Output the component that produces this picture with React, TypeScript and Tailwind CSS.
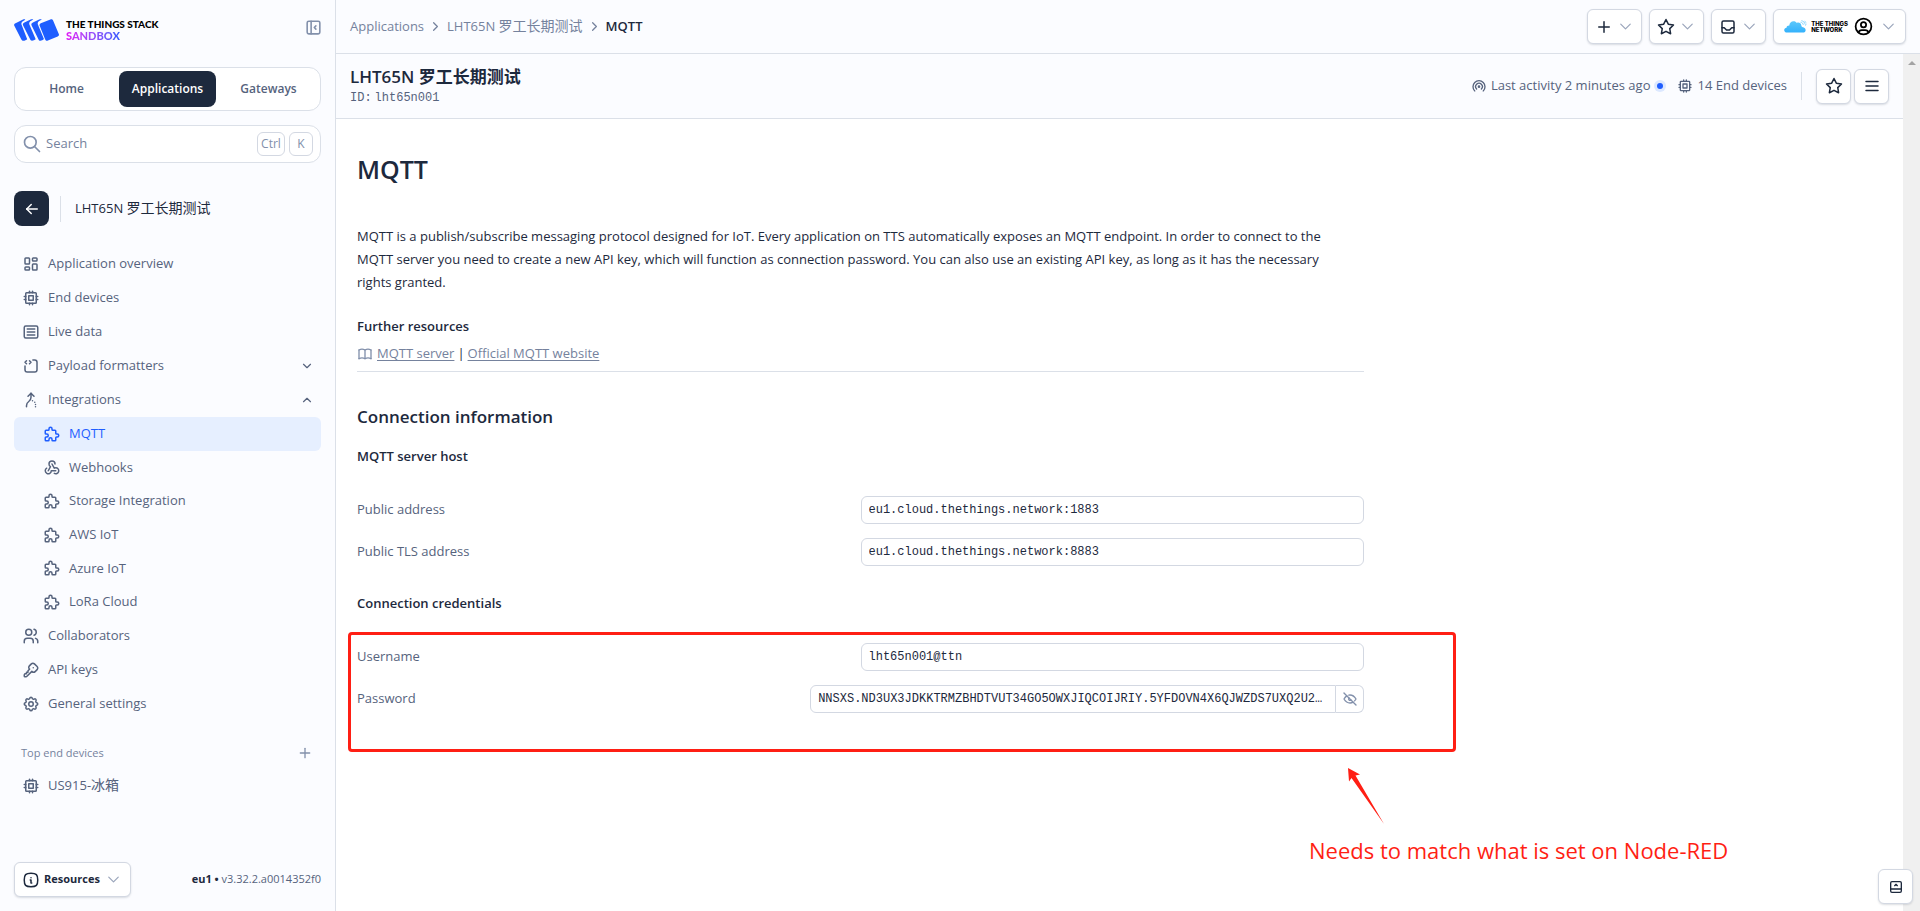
import React from 'react';
import {
  TbArrowLeft,
  TbArrowMergeAltLeft,
  TbArticle,
  TbBook,
  TbBroadcast,
  TbChevronDown,
  TbChevronRight,
  TbChevronUp,
  TbCpu,
  TbEyeOff,
  TbInbox,
  TbInfoSquareRounded,
  TbKey,
  TbLayoutBottombarExpand,
  TbLayoutDashboard,
  TbLayoutSidebarLeftCollapse,
  TbMenu2,
  TbPlus,
  TbPuzzle,
  TbSearch,
  TbSettings,
  TbSourceCode,
  TbStar,
  TbUserCircle,
  TbUsers,
  TbWebhook,
} from 'react-icons/tb';
import type { IconType } from 'react-icons';
import clsx from 'clsx';

interface NavEntry {
  label: React.ReactNode;
  icon: IconType;
  active?: boolean;
  expanded?: boolean;
}

const mainNav: NavEntry[] = [
  { label: 'Application overview', icon: TbLayoutDashboard },
  { label: 'End devices', icon: TbCpu },
  { label: 'Live data', icon: TbArticle },
  { label: 'Payload formatters', icon: TbSourceCode, expanded: false },
  { label: 'Integrations', icon: TbArrowMergeAltLeft, expanded: true },
];

const integrations: NavEntry[] = [
  { label: 'MQTT', icon: TbPuzzle, active: true },
  { label: 'Webhooks', icon: TbWebhook },
  { label: 'Storage Integration', icon: TbPuzzle },
  { label: 'AWS IoT', icon: TbPuzzle },
  { label: 'Azure IoT', icon: TbPuzzle },
  { label: 'LoRa Cloud', icon: TbPuzzle },
];

const bottomNav: NavEntry[] = [
  { label: 'Collaborators', icon: TbUsers },
  { label: 'API keys', icon: TbKey },
  { label: 'General settings', icon: TbSettings },
];

const buttonClass =
  'flex h-[35px] items-center justify-center rounded-md border border-[#d3d8e2] bg-white text-[#1d293d] shadow-[0_1px_2px_rgba(29,41,61,0.15)]';

// The Chinese part of the name is set a touch larger than the Latin part
const AppName: React.FC<{ large?: boolean }> = ({ large }) => (
  <>
    LHT65N <span className={large ? 'text-[17px] leading-none' : 'text-sm leading-none'}>罗工长期测试</span>
  </>
);

const StackLogo: React.FC = () => (
  <a href="#" className="flex items-center gap-[7px]">
    <svg width="45" height="22" viewBox="0 0 45 22" fill="#1f5eff" aria-hidden="true">
      <path d="M1.500 4.200 9 .6c1-.5 1.700-.4 2.300.1C8.600 2.100 6.800 3.400 7.500 5.600l5.700 14.700c-1 .9-3.700 2.100-5 1.200-.5-.4-.9-1.100-1.100-1.600L.2 6.600C-.2 5.500.4 4.700 1.500 4.200Z" />
      <path d="M10.400 3.400 16.600.5c1.200-.5 2-.5 2.700.1-3 1.500-4.700 2.700-3.900 4.900l6.300 14.700c-1.600 1.400-4.200 2-5.200.9L9 6.200c-.5-1.300.3-2.200 1.400-2.800Z" />
      <path d="M18.900 3.400 25.100.5c1.200-.5 2-.5 2.700.1-3 1.500-4.700 2.700-3.900 4.900l6 14.600c-1.500 1.600-4 2.200-5 1.100L17.500 6.200c-.5-1.300.3-2.200 1.400-2.800Z" />
      <path d="m26.800 4.300 9.600-3.900c1.200-.5 2.200 0 2.700 1.100l5.700 13.400c.5 1.100 0 2-1.100 2.500l-9.800 4.200c-1.200.5-2.200 0-2.700-1.100L25.700 6.800c-.5-1.100 0-2 1.100-2.500Z" />
    </svg>
    <span className="flex flex-col font-[Lato] text-[11px] leading-[12px] font-black">
      <span className="text-[10px] text-black">THE THINGS STACK</span>
      <span className="self-start bg-linear-to-r from-[#e010f5] to-[#2f5bff] bg-clip-text text-transparent">
        SANDBOX
      </span>
    </span>
  </a>
);

const NetworkLogo: React.FC = () => (
  <span className="flex items-center gap-[3px]">
    <svg width="24" height="13" viewBox="0 0 24 13" aria-hidden="true">
      <defs>
        <linearGradient id="cloud" x1="0" y1="0" x2="0" y2="1">
          <stop offset="0" stopColor="#5cc8fb" />
          <stop offset="1" stopColor="#33b1fc" />
        </linearGradient>
      </defs>
      <path
        d="M3 12.600C1.200 12.600.2 11.400.2 10 .2 8.700 1.200 7.900 2.500 7.700 2.600 6.200 3.800 5.300 5.300 5.400 5.500 2.900 7.200 1.200 9.500 1.200c1.500 0 2.600.6 3.300 1.700 2-.9 4.200.2 4.500 2.300.1.500.2.900.4 1.200.6.700 1.900.6 2.900 1.500 1.100.9 1.500 2.700.5 3.800-.6.6-1.300.9-2.300.9Z"
        fill="url(#cloud)"
      />
      <path
        d="M16.500 2.200c1.500.1 2.600 1.200 2.800 2.700M17.300.7c2.100.3 3.500 1.700 3.900 3.800M20.500 1.200l1.800 1.400M21 5.500l1.500-1.300"
        fill="none"
        stroke="#6ecbfc"
        strokeWidth="0.8"
      />
    </svg>
    <span className="flex flex-col text-left font-[Inter] text-[6px] leading-[6px] font-extrabold text-black">
      <span>THE THINGS</span>
      <span>NETWORK</span>
    </span>
  </span>
);

const NavItem: React.FC<{ entry: NavEntry; nested?: boolean }> = ({ entry, nested }) => {
  const Icon = entry.icon;
  return (
    <li>
      <a
        href="#"
        className={clsx(
          'flex items-center gap-2 rounded-md pr-[7px]',
          nested ? 'h-full pl-[29px]' : 'h-[34px] pl-2',
          entry.active ? 'bg-[#e6efff] text-[#1f5eff]' : 'text-[#56637d]'
        )}
      >
        <Icon className="size-[18px]" />
        <span className="grow">{entry.label}</span>
        {entry.expanded === true && <TbChevronUp className="size-[14px]" />}
        {entry.expanded === false && <TbChevronDown className="size-[14px]" />}
      </a>
    </li>
  );
};

const Sidebar: React.FC = () => (
  <aside className="flex w-[336px] shrink-0 flex-col border-r border-[#dbe0e8] bg-[#fbfcff] px-[14px] pb-[14px]">
    <div className="mt-[18px] flex items-start justify-between">
      <StackLogo />
      <button aria-label="Collapse sidebar" className="-mr-[2px] text-[#8290ab]">
        <TbLayoutSidebarLeftCollapse className="size-[19px]" />
      </button>
    </div>

    <nav className="mt-[25px] grid h-11 grid-cols-3 items-stretch gap-1 rounded-xl border border-[#dbe0e8] bg-white p-[3px] text-xs font-semibold text-[#56637d]">
      <a href="#" className="flex items-center justify-center rounded-lg">Home</a>
      <a href="#" className="flex items-center justify-center rounded-lg bg-[#1d293d] text-white">Applications</a>
      <a href="#" className="flex items-center justify-center rounded-lg">Gateways</a>
    </nav>

    <div className="mt-[14px] flex h-[38px] items-center gap-1 rounded-xl border border-[#dbe0e8] bg-white pr-[7px] pl-[7px] text-[#8290ab]">
      <TbSearch className="size-[20px]" />
      <input
        type="search"
        aria-label="Search"
        placeholder="Search"
        className="min-w-0 grow bg-transparent outline-none placeholder:text-[#75829d]"
      />
      <kbd className="flex h-6 w-7 items-center justify-center rounded-md border border-[#d3d8e2] font-[inherit] text-xs">Ctrl</kbd>
      <kbd className="flex size-6 items-center justify-center rounded-md border border-[#d3d8e2] font-[inherit] text-xs">K</kbd>
    </div>

    <div className="mt-7 flex items-center">
      <button aria-label="Back" className="flex size-[35px] items-center justify-center rounded-lg bg-[#1d293d] text-white">
        <TbArrowLeft className="size-[18px]" />
      </button>
      <span className="ml-[11px] h-[26px] border-l border-[#dbe0e8]" />
      <span className="ml-[14px] text-[#1d293d]"><AppName /></span>
    </div>

    <nav className="mt-[21px]">
      <ul>
        {mainNav.map((entry, i) => <NavItem key={i} entry={entry} />)}
        <li>
          <ul className="grid h-[202px] auto-rows-fr">
            {integrations.map((entry, i) => <NavItem key={i} entry={entry} nested />)}
          </ul>
        </li>
        {bottomNav.map((entry, i) => <NavItem key={i} entry={entry} />)}
      </ul>
    </nav>

    <div className="mt-[22px] flex h-5 items-center justify-between pr-2 pl-[7px] text-[11px] text-[#75829d]">
      <span>Top end devices</span>
      <button aria-label="Add end device" className="text-[#8290ab]"><TbPlus className="size-4" /></button>
    </div>
    <ul className="mt-[6px]">
      <NavItem entry={{ label: <>US915-<span className="text-sm leading-none">冰箱</span></>, icon: TbCpu }} />
    </ul>

    <div className="mt-auto flex items-center justify-between text-[11px]">
      <button className={clsx(buttonClass, 'gap-1 px-[7px] font-bold')}>
        <TbInfoSquareRounded className="size-[18px]" />
        Resources
        <TbChevronDown className="size-[19px] stroke-[1.5] text-[#9aa5bb]" />
      </button>
      <span className="text-[#56637d]">
        <b className="text-[#1d293d]">eu1 •</b> v3.32.2.a0014352f0
      </span>
    </div>
  </aside>
);

const TopBar: React.FC = () => (
  <header className="flex h-[54px] shrink-0 items-center justify-between border-b border-[#dbe0e8] bg-[#fbfcff] pr-[14px] pl-[14px]">
    <nav aria-label="Breadcrumb" className="flex items-center gap-1 text-[#75829d]">
      <a href="#">Applications</a>
      <TbChevronRight className="size-[15px]" />
      <a href="#"><AppName /></a>
      <TbChevronRight className="size-[15px]" />
      <span className="font-semibold text-[#1d293d]">MQTT</span>
    </nav>
    <div className="flex gap-[7px]">
      {[
        { icon: TbPlus, label: 'Add' },
        { icon: TbStar, label: 'Bookmarks' },
        { icon: TbInbox, label: 'Notifications' },
      ].map(({ icon: Icon, label }) => (
        <button key={label} aria-label={label} className={clsx(buttonClass, 'w-[55px] gap-[3px]')}>
          <Icon className="size-[18px]" />
          <TbChevronDown className="size-[19px] stroke-[1.5] text-[#9aa5bb]" />
        </button>
      ))}
      <button aria-label="Account" className={clsx(buttonClass, 'gap-[5px] pr-[7px] pl-[10px]')}>
        <NetworkLogo />
        <TbUserCircle className="size-[21px] text-black" />
        <TbChevronDown className="size-[19px] stroke-[1.5] text-[#9aa5bb]" />
      </button>
    </div>
  </header>
);

const EntityHeader: React.FC = () => (
  <div className="flex h-[65px] items-center justify-between border-b border-[#dbe0e8] bg-[#fbfcff] pr-[14px] pl-[14px]">
    <div>
      <h2 className="text-[17px] leading-6 font-semibold text-[#1d293d]"><AppName large /></h2>
      <p className="flex gap-[3px] font-['Liberation_Mono',monospace] text-xs leading-[18px] text-[#56637d]">
        <span>ID:</span>
        <span>lht65n001</span>
      </p>
    </div>
    <div className="flex items-center text-[#56637d]">
      <TbBroadcast className="mr-1 size-4" />
      Last activity 2 minutes ago
      <span className="ml-1 flex size-3 items-center justify-center rounded-full bg-[#dce8ff]">
        <span className="size-[6px] rounded-full bg-[#1f5eff]" />
      </span>
      <TbCpu className="mr-1 ml-[11px] size-4" />
      14 End devices
      <span className="mx-[14px] h-7 border-l border-[#dbe0e8]" />
      <button aria-label="Bookmark" className={clsx(buttonClass, 'w-[35px]')}><TbStar className="size-[18px]" /></button>
      <button aria-label="Menu" className={clsx(buttonClass, 'ml-[3px] w-[35px]')}><TbMenu2 className="size-[18px]" /></button>
    </div>
  </div>
);

const fieldClass =
  "h-7 rounded-md border border-[#d3d8e2] bg-white px-[7px] font-['Liberation_Mono',monospace] text-xs text-[#1d293d] outline-none";

const Field: React.FC<{ id: string; label: string; value: string }> = ({ id, label, value }) => (
  <div className="flex items-center justify-between">
    <label htmlFor={id} className="text-[#56637d]">{label}</label>
    <input id={id} readOnly value={value} className={clsx(fieldClass, 'w-1/2')} />
  </div>
);

const PASSWORD = 'NNSXS.ND3UX3JDKKTRMZBHDTVUT34GO5OWXJIQCOIJRIY.5YFDOVN4X6QJWZDS7UXQ2U2…';

const Content: React.FC = () => (
  <div className="w-full max-w-[1049px] px-[21px] pt-[34px] text-[#1d293d]">
    <h1 className="text-[25px] leading-8 font-semibold">MQTT</h1>
    <p className="mt-10 pr-3 leading-[23px]">
      MQTT is a publish/subscribe messaging protocol designed for IoT. Every application on TTS automatically
      exposes an MQTT endpoint. In order to connect to the MQTT server you need to create a new API key, which will
      function as connection password. You can also use an existing API key, as long as it has the necessary rights
      granted.
    </p>
    <h4 className="mt-[22px] leading-5 font-semibold">Further resources</h4>
    <div className="mt-[7px] flex h-[29px] items-start gap-[4px] border-b border-[#dbe0e8] leading-5">
      <TbBook className="mt-[3px] size-4 text-[#8290ab]" />
      <a href="#" className="text-[#75829d] underline underline-offset-2">MQTT server</a>
      <span className="-mx-px">|</span>
      <a href="#" className="text-[#75829d] underline underline-offset-2">Official MQTT website</a>
    </div>

    <h3 className="mt-[33px] text-[17px] leading-6 font-semibold">Connection information</h3>
    <h4 className="mt-[17px] leading-5 font-semibold">MQTT server host</h4>
    <div className="mt-[30px] flex flex-col gap-[14px]">
      <Field id="public-address" label="Public address" value="eu1.cloud.thethings.network:1883" />
      <Field id="public-tls-address" label="Public TLS address" value="eu1.cloud.thethings.network:8883" />
    </div>

    <h4 className="mt-[27px] leading-5 font-semibold">Connection credentials</h4>
    <div className="relative mt-[30px] flex flex-col gap-[14px]">
      <Field id="username" label="Username" value="lht65n001@ttn" />
      <div className="flex items-center justify-between">
        <label htmlFor="password" className="text-[#56637d]">Password</label>
        <div className="flex w-[55%]">
          <input id="password" readOnly value={PASSWORD} className={clsx(fieldClass, 'min-w-0 grow rounded-r-none')} />
          <button aria-label="Hide password" className="flex h-7 w-7 items-center justify-center rounded-r-md border border-l-0 border-[#d3d8e2] text-[#8290ab]">
            <TbEyeOff className="size-4" />
          </button>
        </div>
      </div>

      {/* Callout drawn over the credentials */}
      <div className="pointer-events-none absolute -top-[11px] -right-[92px] -left-[9px] h-[120px] rounded-sm border-3 border-[#ff1f14]" />
      <svg className="pointer-events-none absolute top-[125px] left-[990px]" width="38" height="57" viewBox="0 0 38 57" fill="#ff1f14">
        <path d="M1 0 13 6.500 8.500 7.500 37 56 4.500 10 2 13.500Z" />
      </svg>
      <p className="pointer-events-none absolute top-[191px] left-[952px] text-[22px] leading-8 whitespace-nowrap text-[#ff1f14]">
        Needs to match what is set on Node-RED
      </p>
    </div>
  </div>
);

export default function App() {
  return (
    <div className="flex min-h-screen bg-white font-['Open_Sans','Noto_Sans_CJK_SC',sans-serif] text-[13px]">
      <Sidebar />
      <div className="flex min-w-0 grow flex-col">
        <TopBar />
        <div className="flex grow">
          <main className="min-w-0 grow">
            <EntityHeader />
            <Content />
          </main>
          <div className="flex w-[17px] shrink-0 justify-center bg-[#f0f0f0] pt-[7px]">
            <span className="size-0 border-x-4 border-b-4 border-x-transparent border-b-[#a3a3a3]" />
          </div>
        </div>
      </div>
      <button aria-label="Expand panel" className={clsx(buttonClass, 'fixed right-[7px] bottom-[7px] w-[35px]')}>
        <TbLayoutBottombarExpand className="size-4" />
      </button>
    </div>
  );
}
